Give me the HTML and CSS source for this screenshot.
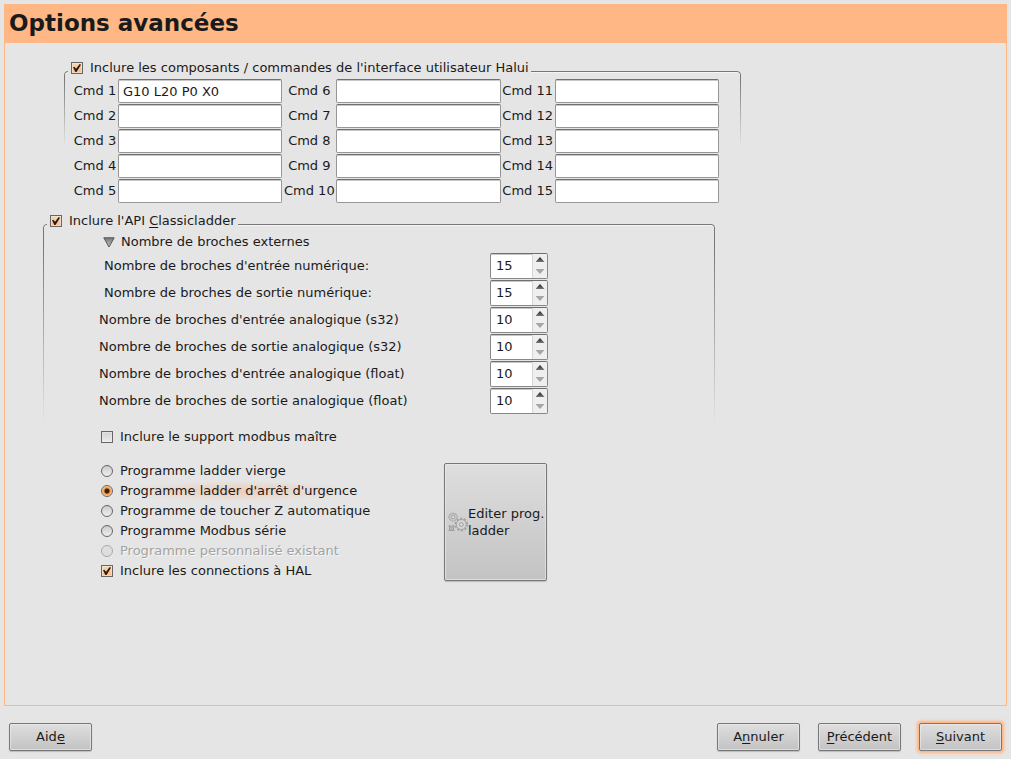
FILE: index.html
```html
<!DOCTYPE html>
<html lang="fr">
<head>
<meta charset="utf-8">
<meta name="viewport" content="width=device-width, initial-scale=1">
<title>Options avancées</title>
<link rel="stylesheet" href="styles.css">
</head>
<body>
<form class="assistant">
  <main class="page">
    <h1 class="title">Options avancées</h1>
    <div class="content">
      <section class="group halui">
        <label class="group-label"><input class="check" type="checkbox" checked><span>Inclure les composants / commandes de l'interface utilisateur Halui</span></label>
        <div class="commands">
          <label for="cmd1">Cmd 1</label><input class="entry" id="cmd1" type="text" value="G10 L20 P0 X0">
          <label for="cmd6">Cmd 6</label><input class="entry" id="cmd6" type="text">
          <label for="cmd11">Cmd 11</label><input class="entry" id="cmd11" type="text">
          <label for="cmd2">Cmd 2</label><input class="entry" id="cmd2" type="text">
          <label for="cmd7">Cmd 7</label><input class="entry" id="cmd7" type="text">
          <label for="cmd12">Cmd 12</label><input class="entry" id="cmd12" type="text">
          <label for="cmd3">Cmd 3</label><input class="entry" id="cmd3" type="text">
          <label for="cmd8">Cmd 8</label><input class="entry" id="cmd8" type="text">
          <label for="cmd13">Cmd 13</label><input class="entry" id="cmd13" type="text">
          <label for="cmd4">Cmd 4</label><input class="entry" id="cmd4" type="text">
          <label for="cmd9">Cmd 9</label><input class="entry" id="cmd9" type="text">
          <label for="cmd14">Cmd 14</label><input class="entry" id="cmd14" type="text">
          <label for="cmd5">Cmd 5</label><input class="entry" id="cmd5" type="text">
          <label for="cmd10">Cmd 10</label><input class="entry" id="cmd10" type="text">
          <label for="cmd15">Cmd 15</label><input class="entry" id="cmd15" type="text">
        </div>
      </section>

      <section class="group ladder">
        <label class="group-label"><input class="check" type="checkbox" checked><span>Inclure l'API <u>C</u>lassicladder</span></label>
        <details class="pins" open>
          <summary class="expander"><svg class="triangle" viewBox="0 0 12 11" aria-hidden="true"><defs><linearGradient id="tri" x1="0" y1="0" x2="0" y2="1"><stop offset="0" stop-color="#777"/><stop offset="1" stop-color="#c4c4c4"/></linearGradient></defs><path d="M.8.8H11.2L6 10Z" fill="url(#tri)" stroke="#555"/></svg>Nombre de broches externes</summary>
          <div class="pin-row indent"><label for="p1">Nombre de broches d'entrée numérique:</label><span class="spin"><input id="p1" type="number" value="15"><span class="steps"><button class="up" type="button" aria-label="Augmenter"></button><button class="down" type="button" aria-label="Diminuer"></button></span></span></div>
          <div class="pin-row indent"><label for="p2">Nombre de broches de sortie numérique:</label><span class="spin"><input id="p2" type="number" value="15"><span class="steps"><button class="up" type="button" aria-label="Augmenter"></button><button class="down" type="button" aria-label="Diminuer"></button></span></span></div>
          <div class="pin-row"><label for="p3">Nombre de broches d'entrée analogique (s32)</label><span class="spin"><input id="p3" type="number" value="10"><span class="steps"><button class="up" type="button" aria-label="Augmenter"></button><button class="down" type="button" aria-label="Diminuer"></button></span></span></div>
          <div class="pin-row"><label for="p4">Nombre de broches de sortie analogique (s32)</label><span class="spin"><input id="p4" type="number" value="10"><span class="steps"><button class="up" type="button" aria-label="Augmenter"></button><button class="down" type="button" aria-label="Diminuer"></button></span></span></div>
          <div class="pin-row"><label for="p5">Nombre de broches d'entrée analogique (float)</label><span class="spin"><input id="p5" type="number" value="10"><span class="steps"><button class="up" type="button" aria-label="Augmenter"></button><button class="down" type="button" aria-label="Diminuer"></button></span></span></div>
          <div class="pin-row"><label for="p6">Nombre de broches de sortie analogique (float)</label><span class="spin"><input id="p6" type="number" value="10"><span class="steps"><button class="up" type="button" aria-label="Augmenter"></button><button class="down" type="button" aria-label="Diminuer"></button></span></span></div>
        </details>
        <div class="options">
          <label class="option"><input class="check" type="checkbox"><span>Inclure le support modbus maître</span></label>
          <div class="programs">
            <div class="program-list">
              <label class="option"><input class="radio" type="radio" name="prog"><span>Programme ladder vierge</span></label>
              <label class="option glow"><input class="radio" type="radio" name="prog" checked><span>Programme ladder d'arrêt d'urgence</span></label>
              <label class="option"><input class="radio" type="radio" name="prog"><span>Programme de toucher Z automatique</span></label>
              <label class="option"><input class="radio" type="radio" name="prog"><span>Programme Modbus série</span></label>
              <label class="option off"><input class="radio" type="radio" name="prog" disabled><span>Programme personnalisé existant</span></label>
              <label class="option"><input class="check" type="checkbox" checked><span>Inclure les connections à HAL</span></label>
            </div>
            <button class="button edit" type="button">
              <svg class="gears" viewBox="0 0 20 20" aria-hidden="true">
                <g fill="none" stroke="#a0a0a0">
                  <path d="M5 .7 6.3 2 8 2 8.3 3.7 9.6 5 8.3 6.3 8 8 6.3 8.3 5 9.6 3.7 8.3 2 8 1.7 6.3.4 5 1.7 3.7 2 2 3.7 2Z" fill="#d6d6d6"/>
                  <circle cx="5" cy="5" r="2"/>
                  <circle cx="13.300" cy="12.500" r="6" stroke-width="1.600" stroke-dasharray="2.100 1.670"/>
                  <circle cx="13.300" cy="12.500" r="5" fill="#d6d6d6"/>
                  <circle cx="13.300" cy="12.500" r="2"/>
                  <path d="M.5 14H6.500M.5 18.500H6.500M1.500 13.500V19M5.500 13.500V19M1.500 14 5.500 18.500M5.500 14 1.500 18.500"/>
                </g>
              </svg>
              <span>Editer prog. ladder</span>
            </button>
          </div>
        </div>
      </section>
    </div>
  </main>
  <footer class="actions">
    <button class="button help" type="button"><span>Aid<u>e</u></span></button>
    <button class="button" type="button"><span>A<u>n</u>nuler</span></button>
    <button class="button" type="button"><span><u>P</u>récédent</span></button>
    <button class="button default" type="submit"><span><u>S</u>uivant</span></button>
  </footer>
</form>
</body>
</html>
```
FILE: styles.css
```css
* { box-sizing: border-box; }

body {
  margin: 0;
  background: #e5e5e5;
  color: #1a1a1a;
  font: 13px/20px "DejaVu Sans", sans-serif;
}

input, button { margin: 0; padding: 0; color: inherit; font: inherit; }
u { text-underline-offset: 2px; text-decoration-thickness: 1px; }

.assistant {
  display: flex;
  flex-direction: column;
  min-height: 100vh;
  padding: 4px 4px 8px;
}

.page {
  flex: 1;
  border: 1px solid #ffb782;
}

.title {
  margin: 0;
  padding: 3px 4px 5px;
  background: #ffb885;
  font: bold 23px/30px "DejaVu Sans", sans-serif;
}

.content { padding: 15px 38px; }

/* Frame whose sides fade out toward the bottom */
.group { position: relative; }

.group::before {
  content: "";
  position: absolute;
  inset: 13px 0 auto;
  border: 1px solid #777;
  border-bottom: 0;
  border-radius: 4px 4px 0 0;
  box-shadow: inset 0 1px #f5f5f5;
  -webkit-mask-image: linear-gradient(#000 10%, transparent);
  mask-image: linear-gradient(#000 10%, transparent);
  pointer-events: none;
}

.halui { max-width: 677px; margin-left: 21px; }
.halui::before { height: 74px; }
.ladder { max-width: 672px; margin-top: 8px; }
.ladder::before { height: 200px; }

.group-label {
  position: relative;
  display: inline-flex;
  align-items: center;
  gap: 7px;
  margin-left: 4px;
  padding: 0 2px 0 3px;
  background: #e5e5e5;
  vertical-align: top;
}

.commands {
  display: grid;
  grid-template-columns: 46px 1fr 54px 1fr 54px 1fr;
  gap: 1px 0;
  align-items: center;
  padding: 1px 22px 0 8px;
  text-align: center;
}

.entry {
  width: 100%;
  height: 24px;
  padding: 0 4px;
  border: 1px solid #969696;
  border-top-color: #6f6f6f;
  border-radius: 2px;
  background: #fff;
  box-shadow: inset 0 1px #c8c8c8;
}

.check, .radio {
  appearance: none;
  flex: none;
  width: 12px;
  height: 12px;
  border: 1px solid #666;
  background: linear-gradient(#d2d2d2, #ececec);
}

.check { box-shadow: inset 0 0 0 1px #eee8; }
.check:checked { background: linear-gradient(#f0dcb0, #ffb98a); }

.check:checked::before {
  content: "";
  display: block;
  width: 8px;
  height: 8px;
  margin: 1px;
  background: #2c1a10;
  clip-path: polygon(0 42%, 16% 34%, 38% 60%, 84% 0, 100% 10%, 44% 100%, 30% 100%);
}

.radio { border-radius: 50%; background: linear-gradient(#cbcbcb, #efefef); }

.radio:checked {
  background: radial-gradient(circle, #401c0c 0 2px, #ed9340 3px, #ffd09b 5px);
}

.pins { padding: 1px 0 0 56px; }

.expander {
  display: flex;
  align-items: center;
  gap: 6px;
  padding-left: 4px;
  list-style: none;
}

.triangle { width: 12px; height: 11px; }

.pin-row {
  display: grid;
  grid-template-columns: 391px 58px;
  align-items: center;
  height: 27px;
}

.indent label { padding-left: 5px; }

.spin {
  display: flex;
  height: 26px;
  overflow: hidden;
  border: 1px solid #888;
  border-top-color: #6f6f6f;
  border-radius: 2px;
  background: #fff;
  box-shadow: inset 0 1px #c8c8c8;
}

.spin input {
  appearance: textfield;
  flex: 1;
  min-width: 0;
  padding-left: 5px;
  border: 0;
  background: none;
}

.spin input::-webkit-inner-spin-button { display: none; }

.steps {
  display: grid;
  width: 15px;
  border-left: 1px solid #d6d6d6;
  background: #efefef;
}

.steps button {
  border: 0;
  background: none;
  display: grid;
  place-items: center;
}

.steps button::before {
  content: "";
  width: 9px;
  height: 5px;
  background: linear-gradient(#222, #777);
  clip-path: polygon(50% 0, 100% 100%, 0 100%);
}

.steps .down::before {
  background: #a6a6a6;
  clip-path: polygon(0 0, 100% 0, 50% 100%);
}

.options { padding: 13px 0 0 58px; }

.option {
  display: flex;
  align-items: center;
  gap: 7px;
  width: max-content;
}

.glow span {
  background: radial-gradient(closest-side, #f2cbb3, transparent);
}

.off { color: #a3a3a3; text-shadow: 1px 1px #f7f7f7; }
.off .radio { border-color: #aaa; background: #dedede; }

.programs {
  display: grid;
  grid-template-columns: 343px 103px;
  margin-top: 14px;
}

.button {
  min-width: 83px;
  height: 28px;
  border: 1px solid #777;
  border-radius: 2px;
  background: linear-gradient(#dedede, #c3c3c3);
  box-shadow: inset 0 0 0 1px #efefef99, 0 1px 1px #bbb;
}

.edit {
  display: flex;
  align-items: center;
  height: 118px;
  margin-top: 2px;
  padding-left: 3px;
  line-height: 17px;
  text-align: left;
}

.gears { flex: none; width: 20px; height: 20px; }

.actions {
  display: flex;
  gap: 18px;
  padding: 17px 5px 0;
}

.help { margin-right: auto; }
.default { box-shadow: inset 0 0 0 1px #efefef99, 0 0 3px 2px #ffb27c; }
```
